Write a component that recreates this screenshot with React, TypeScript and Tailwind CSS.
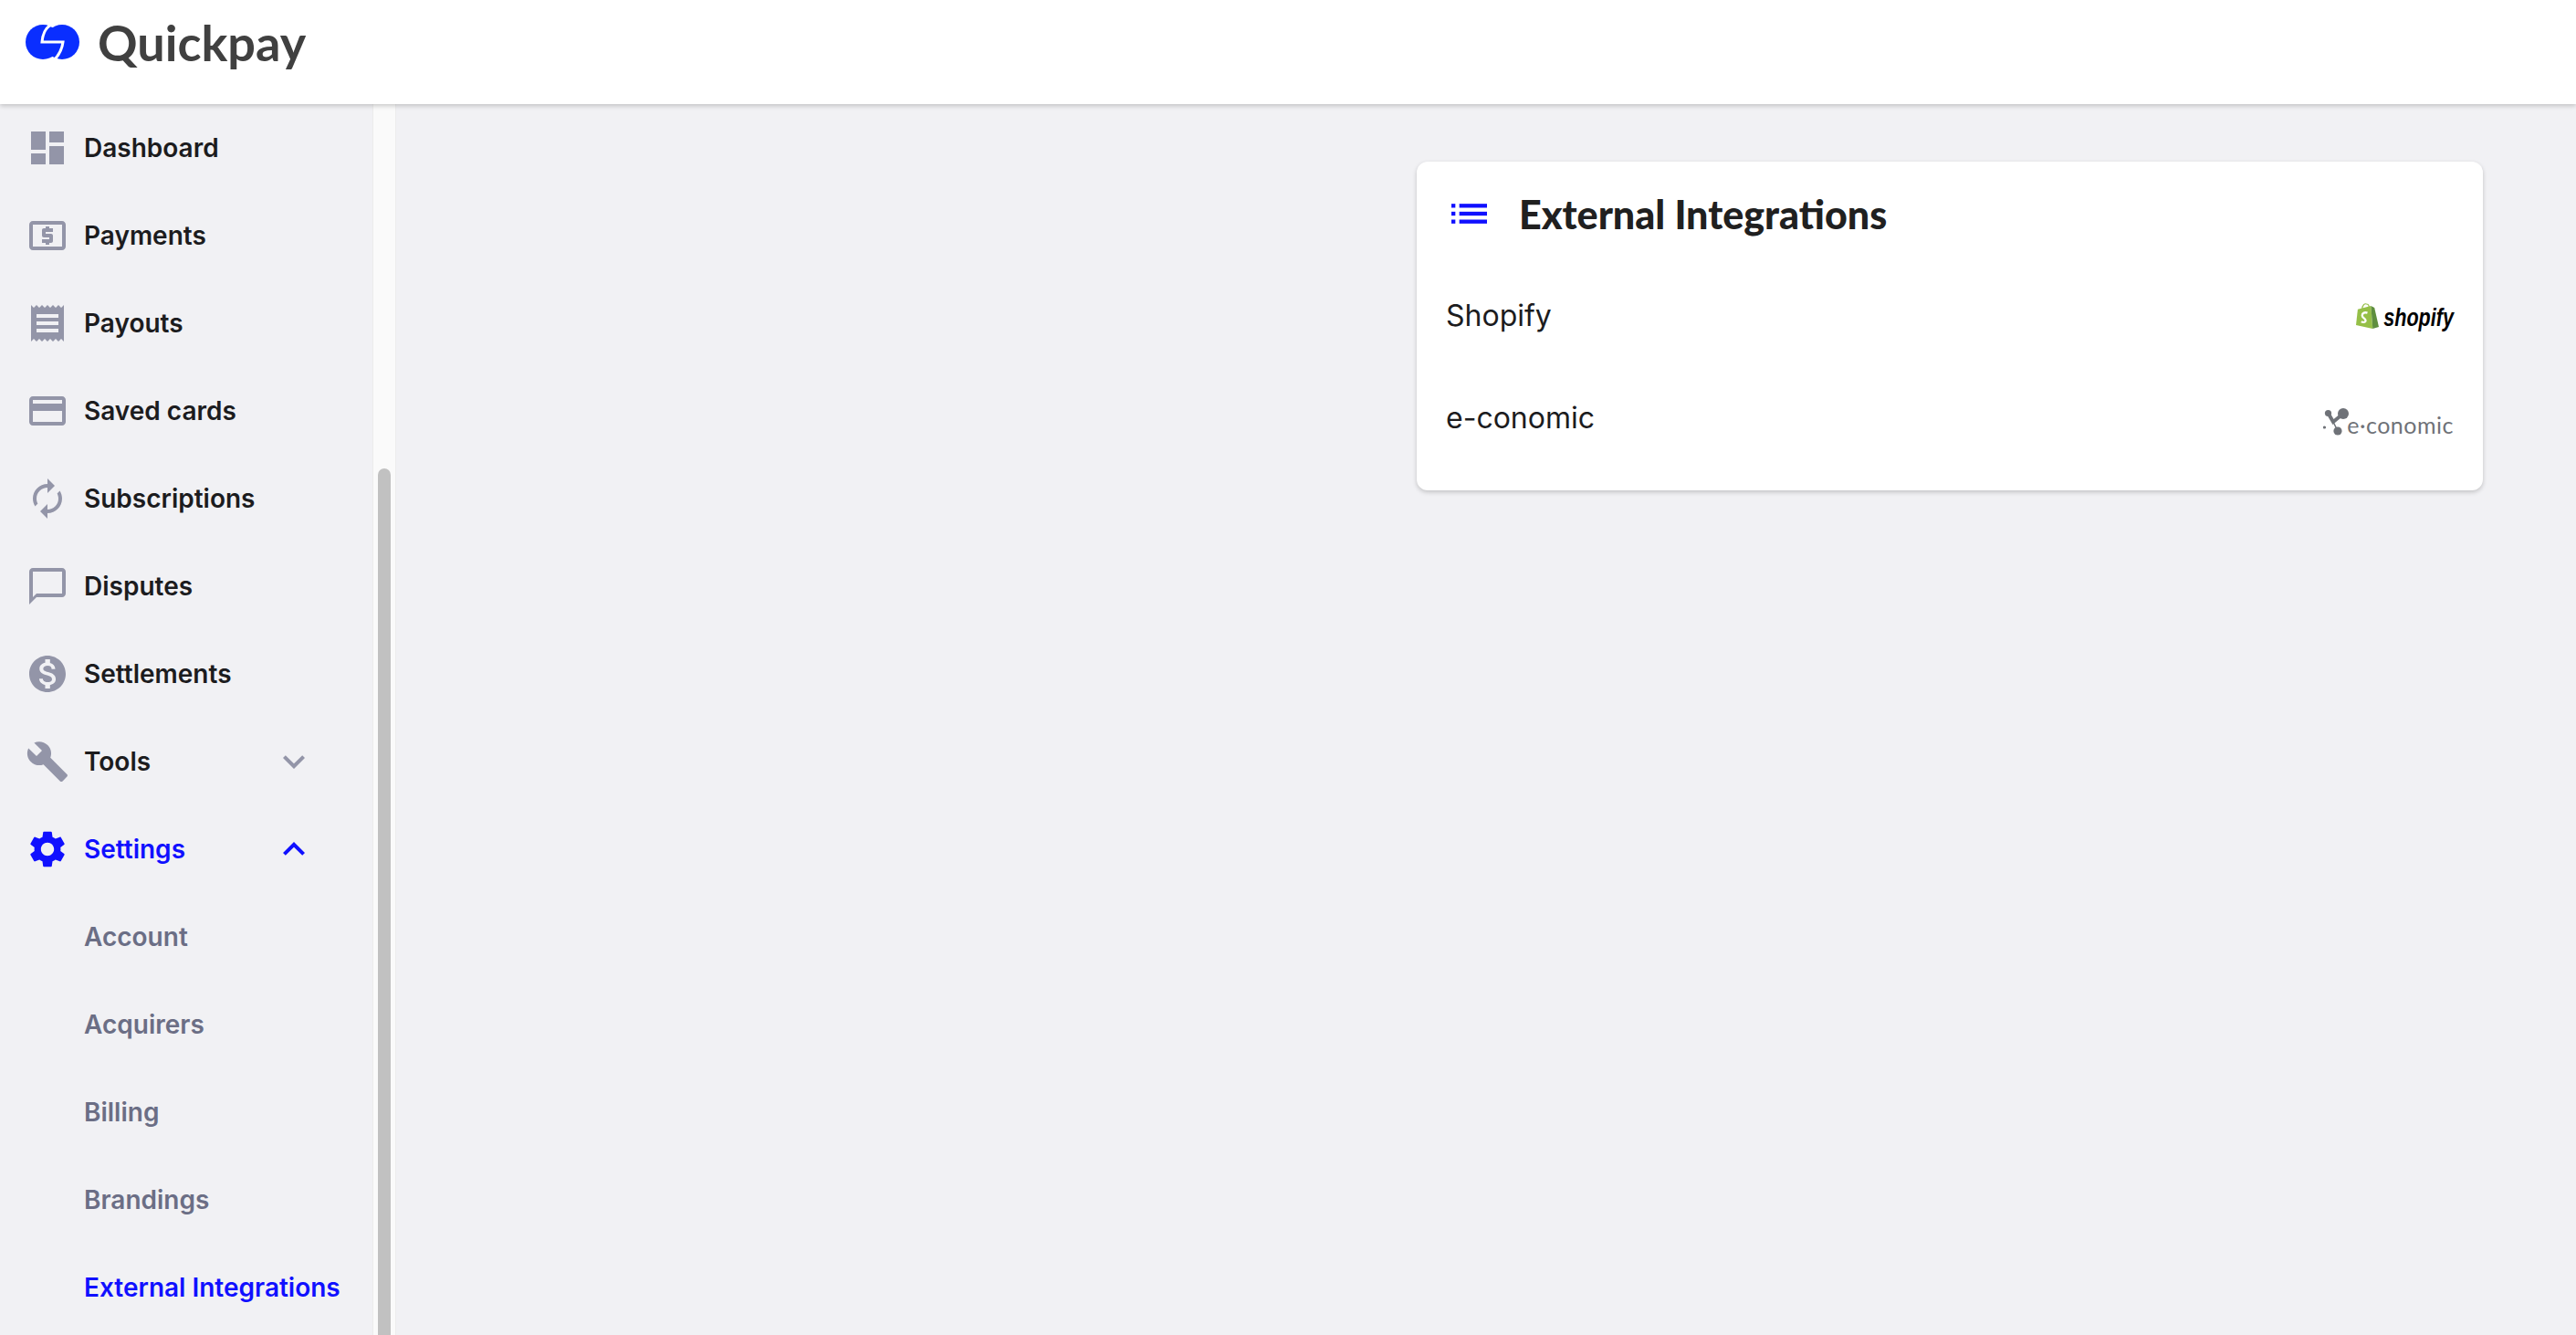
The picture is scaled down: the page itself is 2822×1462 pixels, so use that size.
import type { ReactNode } from "react";

/* ---------------- ICON PATHS ---------------- */
const paths: Record<string, string> = {
  dashboard: "M3 13h8V3H3v10zm0 8h8v-6H3v6zm10 0h8V11h-8v10zm0-18v6h8V3h-8z",
  atm: "M11 17h2v-1h1c.55 0 1-.45 1-1v-3c0-.55-.45-1-1-1h-3v-1h4V8h-2V7h-2v1h-1c-.55 0-1 .45-1 1v3c0 .55.45 1 1 1h3v1H9v2h2v1zm9-13H4c-1.11 0-1.99.89-1.99 2L2 18c0 1.11.89 2 2 2h16c1.11 0 2-.89 2-2V6c0-1.11-.89-2-2-2zm0 14H4V6h16v12z",
  receipt:
    "M18 17H6v-2h12v2zm0-4H6v-2h12v2zm0-4H6V7h12v2zM3 22l1.5-1.5L6 22l1.5-1.5L9 22l1.5-1.5L12 22l1.5-1.5L15 22l1.5-1.5L18 22l1.5-1.5L21 22V2l-1.5 1.5L18 2l-1.5 1.5L15 2l-1.5 1.5L12 2l-1.5 1.5L9 2 7.5 3.5 6 2 4.5 3.5 3 2v20z",
  card: "M20 4H4c-1.11 0-1.99.89-1.99 2L2 18c0 1.11.89 2 2 2h16c1.11 0 2-.89 2-2V6c0-1.11-.89-2-2-2zm0 14H4v-6h16v6zm0-10H4V6h16v2z",
  autorenew:
    "M12 6v3l4-4-4-4v3c-4.42 0-8 3.58-8 8 0 1.57.46 3.03 1.24 4.26L6.7 14.8c-.45-.83-.7-1.79-.7-2.8 0-3.31 2.69-6 6-6zm6.76 1.74L17.3 9.2c.44.84.7 1.79.7 2.8 0 3.31-2.69 6-6 6v-3l-4 4 4 4v-3c4.42 0 8-3.58 8-8 0-1.57-.46-3.03-1.24-4.26z",
  chat: "M20 2H4c-1.1 0-2 .9-2 2v18l4-4h14c1.1 0 2-.9 2-2V4c0-1.1-.9-2-2-2zm0 14H6l-2 2V4h16v12z",
  money:
    "M12 2C6.48 2 2 6.48 2 12s4.48 10 10 10 10-4.48 10-10S17.52 2 12 2zm1.41 16.09V20h-2.67v-1.93c-1.71-.36-3.16-1.46-3.27-3.4h1.96c.1 1.05.82 1.87 2.65 1.87 1.96 0 2.4-.98 2.4-1.59 0-.83-.44-1.61-2.67-2.14-2.48-.6-4.18-1.62-4.18-3.67 0-1.72 1.39-2.84 3.11-3.21V4h2.67v1.95c1.86.45 2.79 1.86 2.85 3.39H14.3c-.05-1.11-.64-1.87-2.22-1.87-1.5 0-2.4.68-2.4 1.64 0 .84.65 1.39 2.67 1.91s4.18 1.39 4.18 3.91c-.01 1.83-1.38 2.83-3.12 3.16z",
  build:
    "M22.7 19l-9.1-9.1c.9-2.3.4-5-1.5-6.9-2-2-5-2.4-7.4-1.3L9 6 6 9 1.6 4.7C.4 7.1.9 10.1 2.9 12.1c1.9 1.9 4.6 2.4 6.9 1.5l9.1 9.1c.4.4 1 .4 1.4 0l2.3-2.3c.5-.4.5-1.1.1-1.4z",
  settings:
    "M19.14 12.94c.04-.3.06-.61.06-.94 0-.32-.02-.64-.07-.94l2.03-1.58c.18-.14.23-.41.12-.61l-1.92-3.32c-.12-.22-.37-.29-.59-.22l-2.39.96c-.5-.38-1.03-.7-1.62-.94l-.36-2.54c-.04-.24-.24-.41-.48-.41h-3.84c-.24 0-.43.17-.47.41l-.36 2.54c-.59.24-1.13.57-1.62.94l-2.39-.96c-.22-.08-.47 0-.59.22L2.74 8.87c-.12.21-.08.47.12.61l2.03 1.58c-.05.3-.09.63-.09.94s.02.64.07.94l-2.03 1.58c-.18.14-.23.41-.12.61l1.92 3.32c.12.22.37.29.59.22l2.39-.96c.5.38 1.03.7 1.62.94l.36 2.54c.05.24.24.41.48.41h3.84c.24 0 .44-.17.47-.41l.36-2.54c.59-.24 1.13-.56 1.62-.94l2.39.96c.22.08.47 0 .59-.22l1.92-3.32c.12-.22.07-.47-.12-.61l-2.01-1.58zM12 15.6c-1.98 0-3.6-1.62-3.6-3.6s1.62-3.6 3.6-3.6 3.6 1.62 3.6 3.6-1.62 3.6-3.6 3.6z",
  down: "M16.59 8.59L12 13.17 7.41 8.59 6 10l6 6 6-6z",
  up: "M12 8l-6 6 1.41 1.41L12 10.83l4.59 4.58L18 14z",
};

function Icon({ name, className }: { name: string; className: string }) {
  return (
    <svg viewBox="0 0 24 24" fill="currentColor" className={className}>
      <path d={paths[name]} />
    </svg>
  );
}

/* ---------------- LOGOS ---------------- */
function QuickpayMark() {
  return (
    <svg viewBox="0 0 59 38" className="w-[59px] h-[38px] shrink-0">
      <circle cx="19" cy="19" r="19" fill="#0a2eff" />
      <circle cx="40" cy="19" r="19" fill="#0a2eff" />
      <path
        d="M31 -1C24 1 19 8 18 19H41C40 27 37 33 31 39"
        fill="none"
        stroke="#fff"
        strokeWidth="3"
      />
    </svg>
  );
}

function ShopifyLogo() {
  return (
    <div className="flex items-end gap-[5px]">
      <svg viewBox="0 0 26 30" className="w-[25px] h-[29px]">
        <path d="M2 7 L17 3 L19 29 L0 25 Z" fill="#95bf47" />
        <path d="M17 3 L21 5 L26 27 L19 29 Z" fill="#5e8e3e" />
        <path
          d="M7 7 C7 2 10 0 12 1 C15 1 15 4 15 6"
          fill="none"
          stroke="#95bf47"
          strokeWidth="1.2"
        />
        <path
          d="M13 11 C10 10 7 11 7 14 C7 17 11 17 11 20 C11 22 8 22 6 21"
          fill="none"
          stroke="#fff"
          strokeWidth="2.4"
        />
      </svg>
      {/* condensed wordmark: no narrow family installed */}
      <span className="-ml-[19px] origin-right scale-x-[0.8] font-['Liberation_Sans',sans-serif] font-bold italic text-[27px] leading-[26px] text-black">
        shopify
      </span>
    </div>
  );
}

function EconomicLogo() {
  return (
    <div className="flex items-end mt-[8px]">
      <svg viewBox="0 0 29 30" className="-mr-[3px] w-[29px] h-[30px] text-[#6f7278]">
        <circle cx="5.5" cy="5.5" r="3.6" fill="currentColor" />
        <circle cx="22" cy="6" r="6" fill="currentColor" />
        <circle cx="16" cy="25" r="4.6" fill="currentColor" />
        <circle cx="1.5" cy="21" r="1.6" fill="currentColor" />
        <path d="M5.5 5.5 L11 15 L22 6" stroke="currentColor" strokeWidth="4" fill="none" />
        <path d="M11 15 L16 25" stroke="currentColor" strokeWidth="1.5" />
      </svg>
      <span className="font-['Lato',sans-serif] font-normal text-[25px] leading-[24px] tracking-[0.5px] text-[#6f7278]">
        e·conomic
      </span>
    </div>
  );
}

/* ---------------- SIDEBAR ---------------- */
const mainNav = [
  { label: "Dashboard", icon: "dashboard" },
  { label: "Payments", icon: "atm" },
  { label: "Payouts", icon: "receipt" },
  { label: "Saved cards", icon: "card" },
  { label: "Subscriptions", icon: "autorenew" },
  { label: "Disputes", icon: "chat" },
  { label: "Settlements", icon: "money" },
];

const settingsNav = ["Account", "Acquirers", "Billing", "Brandings"];

function NavRow({ children }: { children: ReactNode }) {
  return (
    <div className="flex items-center h-[96px] pl-[28px] gap-[16px] text-[28px] font-semibold whitespace-nowrap">
      {children}
    </div>
  );
}

function Sidebar() {
  return (
    <aside className="w-[408px] shrink-0 bg-[#f1f1f4] text-[#1c1c1e]">
      {mainNav.map((item) => (
        <NavRow key={item.label}>
          <Icon name={item.icon} className="w-[48px] h-[48px] text-[#9395a8]" />
          <span>{item.label}</span>
        </NavRow>
      ))}
      <NavRow>
        <Icon name="build" className="w-[48px] h-[48px] text-[#9395a8]" />
        <span className="w-[190px]">Tools</span>
        <Icon name="down" className="w-[48px] h-[48px] text-[#9395a8]" />
      </NavRow>
      <NavRow>
        <Icon name="settings" className="w-[48px] h-[48px] text-[#1010ff]" />
        <span className="w-[190px] text-[#1010ff]">Settings</span>
        <Icon name="up" className="w-[48px] h-[48px] text-[#1010ff]" />
      </NavRow>
      {settingsNav.map((label) => (
        <div
          key={label}
          className="flex items-center h-[96px] pl-[92px] text-[28px] font-semibold text-[#6b6e85]"
        >
          {label}
        </div>
      ))}
      <div className="flex items-center h-[96px] pl-[92px] text-[28px] font-semibold text-[#1010ff] whitespace-nowrap">
        External Integrations
      </div>
    </aside>
  );
}

function SidebarScrollbar() {
  return (
    <div className="w-[26px] shrink-0 bg-[#fafafa] border-x border-[#ececec] px-[5px] pt-[399px]">
      <div className="h-full rounded-t-full bg-[#c1c1c1]" />
    </div>
  );
}

/* ---------------- APP ---------------- */
export default function App() {
  return (
    <div className="h-screen flex flex-col overflow-hidden bg-[#f1f1f4] font-['Inter',sans-serif] text-[#1c1c1e]">
      <header className="relative z-10 h-[114px] shrink-0 bg-white shadow-[0_2px_5px_rgba(0,0,0,0.2)] flex items-start pl-[28px] pt-[27px] gap-[20px]">
        <QuickpayMark />
        <span className="font-['Lato',sans-serif] font-bold text-[54px] leading-[40px] text-[#404040]">
          Quickpay
        </span>
      </header>

      <div className="flex flex-1 min-h-0">
        <Sidebar />
        <SidebarScrollbar />

        <main className="flex-1 flex justify-end items-start pt-[63px] pr-[102px]">
          <section className="w-[1168px] h-[360px] bg-white rounded-[12px] shadow-[0_2px_5px_rgba(0,0,0,0.2)] px-[32px] pt-[23px]">
            <div className="flex items-center h-[68px] gap-[35px] pl-[6px]">
              <svg viewBox="0 0 36 20" className="w-[39px] h-[22px] text-[#1010ff]" fill="currentColor">
                <rect x="0" y="0" width="4" height="4" />
                <rect x="0" y="8" width="4" height="4" />
                <rect x="0" y="16" width="4" height="4" />
                <rect x="8" y="0" width="28" height="4" />
                <rect x="8" y="8" width="28" height="4" />
                <rect x="8" y="16" width="28" height="4" />
              </svg>
              <h1 className="font-['Lato',sans-serif] font-black text-[43px] leading-none text-[#202020]">
                External Integrations
              </h1>
            </div>
            <div className="flex items-center justify-between h-[112px] mt-[22px] text-[32px]">
              <span>Shopify</span>
              <ShopifyLogo />
            </div>
            <div className="flex items-center justify-between h-[112px] text-[32px]">
              <span>e-conomic</span>
              <EconomicLogo />
            </div>
          </section>
        </main>
      </div>
    </div>
  );
}
